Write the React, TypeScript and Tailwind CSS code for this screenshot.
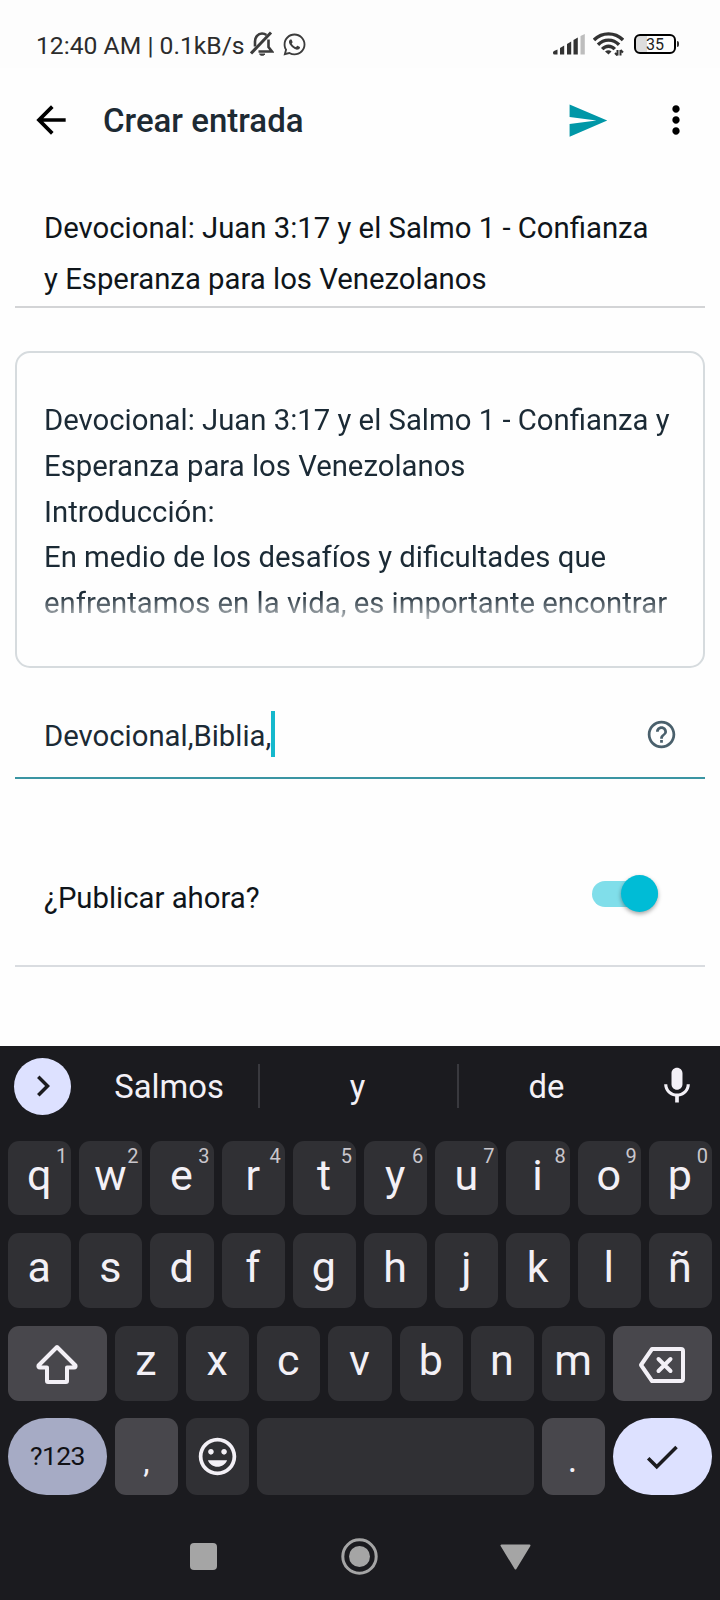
import React, { useState } from 'react';
import { clsx } from 'clsx';
import {
  MdArrowBack,
  MdCheck,
  MdChevronRight,
  MdHelpOutline,
  MdInsertEmoticon,
  MdMic,
  MdMoreVert,
  MdSend
} from 'react-icons/md';
import { FaWhatsapp } from 'react-icons/fa';

const topRow = ['q', 'w', 'e', 'r', 't', 'y', 'u', 'i', 'o', 'p'];
const middleRow = ['a', 's', 'd', 'f', 'g', 'h', 'j', 'k', 'l', 'ñ'];
const bottomRow = ['z', 'x', 'c', 'v', 'b', 'n', 'm'];

const BellOffIcon: React.FC = () => (
  <svg width="24" height="26" viewBox="0 0 24 26" fill="none" stroke="#3c3c3c" strokeWidth="2.6">
    <path d="M5 15.500V10.500C5 6 8 2.500 12 2.500c1.800 0 3.200.5 4.400 1.500M18.500 8.500V16l3.500 4.500H8.500" />
    <path d="M1 22.500L21 1.500" strokeWidth="3" />
    <path d="M9.500 23h5.500c-.6 1.800-4.900 1.800-5.500 0z" fill="#3c3c3c" strokeWidth="1" />
  </svg>
);

const SignalIcon: React.FC = () => (
  <svg width="32" height="21" viewBox="0 0 32 21" fill="#333">
    <path d="M0 18.500Q0 17.500 1 17L4.500 15.500V20.500H1.500Q0 20.500 0 19z" />
    <path d="M7 14L11.200 11.500V20.500H7z" />
    <path d="M14 10L18.200 7.500V20.500H14z" />
    <path d="M20.500 6L24.800 3.500V20.500H20.500z" />
    <path d="M27.500 2L31.800 0V20.500H27.500z" fill="#bdbdbd" />
  </svg>
);

const WifiIcon: React.FC = () => (
  <svg width="31" height="24" viewBox="0 0 31 24" fill="none" stroke="#333" strokeWidth="3.4">
    <path d="M1 8C9-.2 22-.2 30 8" />
    <path d="M5 12.800C11 6.600 20 6.600 26 12.800" />
    <path d="M9.200 17.200C13 13.200 18 13.200 21.800 17.200" />
    <path d="M12 19.500Q15.500 17 18.500 19.500L15.500 22.500z" fill="#333" stroke="none" />
    <path d="M24.500 18V23.500M22 21L24.500 23.500M27.500 23.500V18M30 20.500L27.500 18" strokeWidth="2" />
  </svg>
);

const ShiftIcon: React.FC = () => (
  <svg width="44" height="42" viewBox="0 0 44 42" fill="none" stroke="#f3f0f6" strokeWidth="4" strokeLinejoin="round">
    <path d="M22 4L3.500 22.500Q3 24.500 5 24.500H12V38Q12 39 13 39H31Q32 39 32 38V24.500H39Q41 24.500 40.500 22.500z" />
  </svg>
);

const BackspaceIcon: React.FC = () => (
  <svg width="48" height="38" viewBox="0 0 48 38" fill="none" stroke="#f3f0f6" strokeWidth="4" strokeLinejoin="round" strokeLinecap="round">
    <path d="M14 3H43Q45 3 45 5V33Q45 35 43 35H14L3 19z" />
    <path d="M20.500 13L32.500 25M32.500 13L20.500 25" />
  </svg>
);

interface KeyProps {
  label: string;
  hint?: string;
}

const Key: React.FC<KeyProps> = ({ label, hint }) => (
  <button className="relative flex h-full min-w-0 flex-1 items-center justify-center rounded-[11px] bg-[#303034] pb-[6px] pr-[1px] text-[43px] leading-none text-[#f3f0f6]">
    {label}
    {hint && (
      <span className="absolute right-[4px] top-[5px] text-[20px] leading-5 text-[#c9c6cc]">{hint}</span>
    )}
  </button>
);

const App: React.FC = () => {
  const [publishNow, setPublishNow] = useState(true);

  return (
    <div className="flex h-[1600px] w-[720px] flex-col overflow-hidden bg-[#fefefe] font-[Roboto,sans-serif]">
      {/* Status bar */}
      <div className="flex h-[68px] shrink-0 items-center bg-[#fdfdfd] pl-[36px] pr-[41px] pt-[20px]">
        <span className="w-[212px] whitespace-nowrap pt-[5px] text-[24.700px] leading-none text-[#2c2c2c]">
          12:40 AM | 0.1kB/s
        </span>
        <div className="ml-[2px] flex items-center gap-[8px]">
          <BellOffIcon />
          <FaWhatsapp size={25} color="#3c3c3c" />
        </div>
        <div className="ml-auto flex items-center">
          <SignalIcon />
          <div className="ml-[8px]">
            <WifiIcon />
          </div>
          <div className="ml-[10px] flex h-5 w-[42px] items-center justify-center rounded-[6px] border-2 border-black bg-linear-to-r from-[#dddddd] from-30% to-transparent to-30% pt-px text-[16px] leading-none text-[#222]">
            35
          </div>
          <div className="ml-px h-[6px] w-[2px] rounded-r bg-[#333]" />
        </div>
      </div>

      {/* App bar */}
      <header className="flex h-[104px] shrink-0 items-center pl-[29px] pr-[22px]">
        <MdArrowBack size={44} color="#000" />
        <h1 className="ml-[30px] text-[33px] font-medium leading-none text-[#1d2a33]">Crear entrada</h1>
        <div className="ml-auto flex items-center gap-[45px]">
          <MdSend size={43} color="#0097a7" />
          <MdMoreVert size={44} color="#000" />
        </div>
      </header>

      <main className="flex shrink-0 flex-col px-[15px] text-[29.300px] text-[#1b2a35]">
        <div className="h-[136px] border-b-2 border-[#d3d4d6] pl-[29px] pt-[31px] leading-[51px] text-[#0f151a]">
          <p className="whitespace-nowrap">Devocional: Juan 3:17 y el Salmo 1 - Confianza</p>
          <p className="whitespace-nowrap">y Esperanza para los Venezolanos</p>
        </div>

        <div className="mt-[43px] h-[317px] rounded-[15px] border-2 border-[#d6dbde] pl-[27px] pt-[45px] leading-[45.800px]">
          <div className="h-[229px] overflow-hidden mask-[linear-gradient(to_bottom,#000_86%,transparent_101%)]">
            <p className="whitespace-nowrap">Devocional: Juan 3:17 y el Salmo 1 - Confianza y</p>
            <p className="whitespace-nowrap">Esperanza para los Venezolanos</p>
            <p className="whitespace-nowrap">Introducción:</p>
            <p className="whitespace-nowrap">En medio de los desafíos y dificultades que</p>
            <p className="whitespace-nowrap">enfrentamos en la vida, es importante encontrar</p>
          </div>
        </div>

        <div className="flex h-[111px] items-center border-b-2 border-[#3a95a3] pl-[29px] pr-[27px] pt-[23px]">
          <span className="pt-[5px] leading-none">Devocional,Biblia,</span>
          <span className="h-[46px] w-[4px] bg-[#15b8cc]" />
          <MdHelpOutline className="ml-auto" size={33} color="#4a606c" />
        </div>

        <div className="flex h-[188px] items-center justify-between border-b-2 border-[#d9dce0] pl-[29px] pr-[47px] pt-[54px]">
          <span className="text-[#0f151a]">¿Publicar ahora?</span>
          <button
            onClick={() => setPublishNow(!publishNow)}
            className={clsx(
              'mb-[11px] flex h-[26px] w-[66px] items-center rounded-full bg-[#80deea]',
              publishNow ? 'justify-end' : 'justify-start'
            )}
          >
            <span className="size-[37px] shrink-0 rounded-full bg-[#00bcd6] shadow-[0_2px_4px_rgba(0,0,0,0.35)]" />
          </button>
        </div>
      </main>

      {/* Keyboard */}
      <section className="mt-auto flex h-[554px] shrink-0 flex-col bg-[#1b1b1f] px-2 text-[#f3f0f6]">
        <div className="flex h-[95px] items-center pb-[15px] pl-[6px] pr-[13px]">
          <button className="flex size-[57px] items-center justify-center rounded-full bg-[#dde1ff]">
            <MdChevronRight size={42} color="#1b1b1f" />
          </button>
          <div className="flex h-11 flex-1 items-center text-center text-[32.800px] leading-none">
            <span className="w-[187px] pl-[9px] pt-[2px]">Salmos</span>
            <span className="flex h-11 w-[201px] items-center justify-center border-x-2 border-[#39393e] pr-[2px] pt-[2px]">y</span>
            <span className="w-[175px] pt-[2px]">de</span>
          </div>
          <MdMic size={44} />
        </div>

        <div className="flex h-[74px] gap-2">
          {topRow.map((letter, i) => (
            <Key key={letter} label={letter} hint={String((i + 1) % 10)} />
          ))}
        </div>
        <div className="mt-[18px] flex h-[75px] gap-2">
          {middleRow.map((letter) => (
            <Key key={letter} label={letter} />
          ))}
        </div>
        <div className="mt-[18px] flex h-[75px] gap-2">
          <button className="flex w-[98.800px] items-center justify-center rounded-[11px] bg-[#48474c]">
            <ShiftIcon />
          </button>
          {bottomRow.map((letter) => (
            <Key key={letter} label={letter} />
          ))}
          <button className="flex w-[98.800px] items-center justify-center rounded-[11px] bg-[#48474c] pr-[2px] pt-[3px]">
            <BackspaceIcon />
          </button>
        </div>
        <div className="mt-[17px] flex h-[77px] gap-2">
          <button className="w-[98.800px] rounded-full bg-[#a6abc5] text-[26.500px] leading-none tracking-[-0.600px] text-[#111115]">
            ?123
          </button>
          <button className="w-[63.200px] rounded-[11px] bg-[#48474c] pt-[8px] text-[32px] leading-none">,</button>
          <button className="flex w-[63.200px] items-center justify-center rounded-[11px] bg-[#303034] pr-px">
            <MdInsertEmoticon size={45} />
          </button>
          <button className="flex-1 rounded-[11px] bg-[#303034]" />
          <button className="w-[63.200px] rounded-[11px] bg-[#48474c] pr-[2px] pt-[6px] text-[36px] leading-none">.</button>
          <button className="flex w-[98.800px] items-center justify-center rounded-full bg-[#dde1ff] pr-[2px]">
            <MdCheck size={42} color="#1b1b1f" />
          </button>
        </div>

        {/* System navigation */}
        <div className="flex flex-1 items-center pl-[182px] pt-[18px]">
          <div className="size-[27px] rounded-[4px] bg-[#a5a5a5]" />
          <svg className="ml-[124px]" width="37" height="37" viewBox="0 0 37 37" fill="none">
            <circle cx="18.500" cy="18.500" r="16.700" stroke="#a5a5a5" strokeWidth="3" />
            <circle cx="18.500" cy="18.500" r="10.500" fill="#a5a5a5" />
          </svg>
          <svg className="ml-[122px]" width="31" height="26" viewBox="0 0 31 26" fill="#a5a5a5" stroke="#a5a5a5" strokeWidth="2" strokeLinejoin="round">
            <path d="M1.500 1.500H29.500L15.500 24.500z" />
          </svg>
        </div>
      </section>
    </div>
  );
};

export default App;
